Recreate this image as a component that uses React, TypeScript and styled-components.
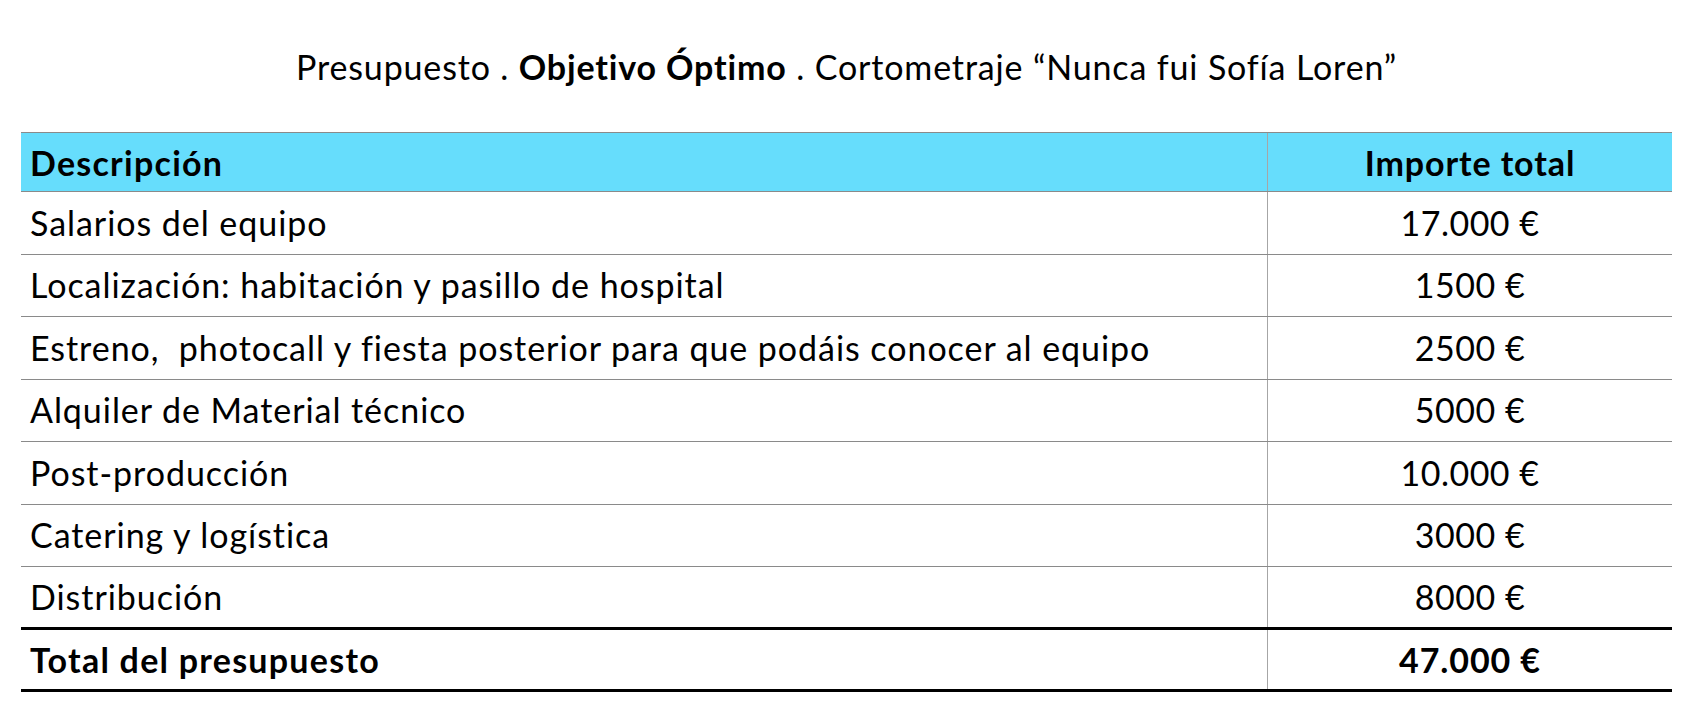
import React from "react";
import styled, { createGlobalStyle } from "styled-components";

const GlobalStyle = createGlobalStyle`
  html, body {
    margin: 0;
    padding: 0;
    background: #ffffff;
  }
  body {
    font-family: "Lato", "Liberation Sans", sans-serif;
    color: #000000;
    font-variant-ligatures: none;
  }
`;

const Page = styled.div`
  width: 1696px;
  height: 716px;
  box-sizing: border-box;
  padding: 0 24px 0 21px;
  display: flex;
  flex-direction: column;
`;

const Title = styled.h1`
  margin: 0;
  height: 132px;
  display: flex;
  align-items: center;
  justify-content: center;
  font-size: 34px;
  font-weight: 400;
  letter-spacing: 0.85px;
  white-space: pre;
  box-sizing: border-box;
`;

const Strong = styled.strong`
  font-weight: 700;
`;

const Table = styled.div`
  display: flex;
  flex-direction: column;
  border-top: 1px solid #8a8a8a;
`;

type Variant = "head" | "body" | "lastBody" | "total";

const Row = styled.div<{ $variant: Variant }>`
  display: grid;
  grid-template-columns: 1247px 1fr;
  box-sizing: border-box;
  background: ${(p) => (p.$variant === "head" ? "#66ddfc" : "transparent")};
  border-bottom: ${(p) =>
    p.$variant === "lastBody" || p.$variant === "total"
      ? "3px solid #000000"
      : "1px solid #8a8a8a"};
  height: ${(p) =>
    p.$variant === "head" ? "59px" : p.$variant === "total" ? "62px" : "63px"};
  font-weight: ${(p) => (p.$variant === "head" || p.$variant === "total" ? 700 : 400)};
  &:nth-child(odd) {
    height: ${(p) => (p.$variant === "body" ? "62px" : undefined)};
  }
`;

const DescCell = styled.div<{ $bold?: boolean }>`
  display: flex;
  align-items: center;
  padding-left: 9px;
  padding-bottom: ${(p) => (p.$bold ? "0" : "2px")};
  border-right: 1px solid #a6a6a6;
  font-size: 34px;
  letter-spacing: ${(p) => (p.$bold ? "1.25px" : "0.95px")};
  white-space: pre;
`;

const AmountCell = styled.div<{ $bold?: boolean }>`
  display: flex;
  align-items: center;
  justify-content: center;
  padding-bottom: ${(p) => (p.$bold ? "0" : "2px")};
  font-size: 34px;
  letter-spacing: ${(p) => (p.$bold ? "0.9px" : "0.5px")};
`;

const items: [string, string][] = [
  ["Salarios del equipo", "17.000 €"],
  ["Localización: habitación y pasillo de hospital", "1500 €"],
  ["Estreno,  photocall y fiesta posterior para que podáis conocer al equipo", "2500 €"],
  ["Alquiler de Material técnico", "5000 €"],
  ["Post-producción", "10.000 €"],
  ["Catering y logística", "3000 €"],
  ["Distribución", "8000 €"],
];

export default function App() {
  return (
    <>
      <GlobalStyle />
      <Page>
        <Title>
          Presupuesto . <Strong>Objetivo Óptimo</Strong> . Cortometraje “Nunca fui Sofía Loren”
        </Title>
        <Table>
          <Row $variant="head">
            <DescCell $bold>Descripción</DescCell>
            <AmountCell $bold>Importe total</AmountCell>
          </Row>
          {items.map(([d, a], i) => (
            <Row key={d} $variant={i === items.length - 1 ? "lastBody" : "body"}>
              <DescCell>{d}</DescCell>
              <AmountCell>{a}</AmountCell>
            </Row>
          ))}
          <Row $variant="total">
            <DescCell $bold>Total del presupuesto</DescCell>
            <AmountCell $bold>47.000 €</AmountCell>
          </Row>
        </Table>
      </Page>
    </>
  );
}
